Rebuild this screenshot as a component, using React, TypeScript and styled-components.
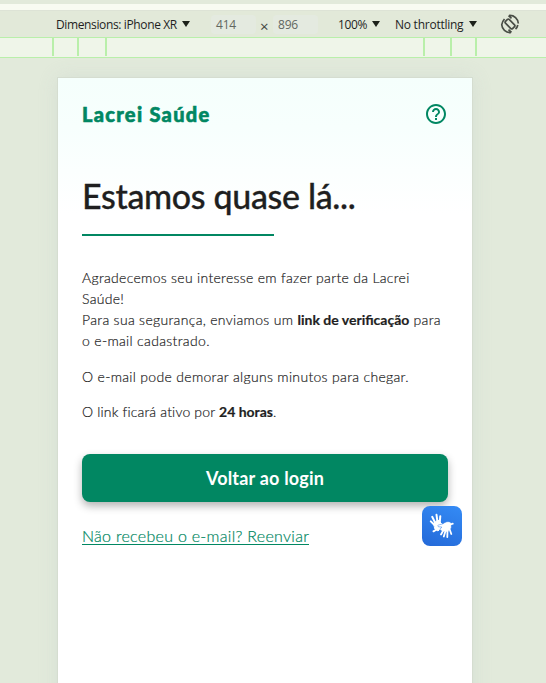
import React from "react";
import styled, { createGlobalStyle } from "styled-components";

const green = "#018762";

const GlobalStyle = createGlobalStyle`
  * { box-sizing: border-box; }
  body { margin: 0; background: #e2eadb; overflow: hidden; }
`;

const Page = styled.div`
  display: flex;
  flex-direction: column;
  width: 546px;
  height: 683px;
  overflow: hidden;
  background: #e2eadb;
  font-family: Lato, "Open Sans", sans-serif;
  color: #1f1f1f;
`;

const TopStrip = styled.div`
  flex: none;
  height: 10px;
  border-top: 4px solid #e2eadb;
  background: #f8fbf2;
`;

const Toolbar = styled.div`
  flex: none;
  display: flex;
  align-items: center;
  height: 27px;
  padding-left: 56px;
  border-top: 1px solid #dde3d6;
  background: #e2e9d9;
  font: 12px/16px "Open Sans", "Noto Sans", sans-serif;
  white-space: nowrap;
`;

const ToolLabel = styled.span<{ $w: number; $ls?: number }>`
  width: ${(p) => p.$w}px;
  flex: none;
  padding-top: 1px;
  letter-spacing: ${(p) => p.$ls ?? 0}px;
`;

const Caret = styled.span<{ $gap: number }>`
  flex: none;
  width: 8px;
  height: 6px;
  margin-right: ${(p) => p.$gap}px;
  background: #1c211a;
  clip-path: polygon(0 0, 100% 0, 50% 100%);
`;

const SizeField = styled.span<{ $gap: number }>`
  flex: none;
  width: 45px;
  height: 19px;
  padding-left: 5px;
  line-height: 19px;
  margin-right: ${(p) => p.$gap}px;
  border-radius: 4px;
  background: #e4eae0;
  color: #62675f;
  letter-spacing: -0.2px;
`;

const Times = styled.span`
  flex: none;
  width: 13px;
  padding-top: 3px;
  font-size: 15px;
  color: #41463e;
`;

const Ruler = styled.div`
  flex: none;
  display: flex;
  height: 21px;
  border-top: 1px solid #b9efaa;
  border-bottom: 1px solid #b9efaa;
  background: #eff5e9;
`;

const Tick = styled.i<{ $gap: number }>`
  width: 2px;
  height: 18px;
  margin-left: ${(p) => p.$gap}px;
  background: #b9efaa;
`;

const Stage = styled.div`
  flex: 1;
  padding: 20px 0 0 58px;
`;

const Device = styled.main`
  position: relative;
  width: 414px;
  height: 640px;
  padding: 24px 24px 0;
  background: linear-gradient(#f5fffc 0, #f7fffd 50px, #ffffff 136px);
  box-shadow: 0 0 0 1px #d5ddd0, 0 0 18px rgba(205, 215, 208, 0.65);
`;

const Header = styled.header`
  display: flex;
  align-items: center;
  justify-content: space-between;
  height: 24px;
  color: ${green};
`;

const Brand = styled.span`
  font-size: 20px;
  line-height: 24px;
  font-weight: 900;
  letter-spacing: 1.3px;
  white-space: nowrap;
  -webkit-text-stroke: 0.6px ${green};
`;

const Title = styled.h1`
  margin: 46px 0 0;
  padding-bottom: 13px;
  height: 62px;
  font-size: 34px;
  line-height: 48px;
  font-weight: 500;
  letter-spacing: -0.34px;
  white-space: nowrap;
  -webkit-text-stroke: 0.3px #1f1f1f;
`;

const Rule = styled.div`
  width: 192px;
  height: 2px;
  background: ${green};
`;

const Copy = styled.section`
  margin-top: 31px;
  font-size: 14px;
  line-height: 21px;
  font-weight: 300;
  -webkit-text-stroke: 0.2px #1f1f1f;
`;

const Paragraph = styled.p`
  margin: 0 0 14.5px;
`;

const Line = styled.span<{ $ls: number }>`
  display: block;
  white-space: nowrap;
  letter-spacing: ${(p) => p.$ls}px;
`;

const Strong = styled.strong`
  font-weight: 700;
  letter-spacing: 0;
`;

const Button = styled.button`
  display: block;
  width: 366px;
  height: 48px;
  margin: 32px 0 0;
  padding: 0;
  border: 0;
  border-radius: 8px;
  background: ${green};
  box-shadow: 0 4px 8px rgba(0, 0, 0, 0.3);
  color: #fff;
  font: 700 18px/48px Lato, sans-serif;
  letter-spacing: 0.2px;
`;

const ResendLink = styled.a`
  display: block;
  width: 227px;
  height: 19px;
  margin-top: 24px;
  border-bottom: 1px solid ${green};
  color: ${green};
  font-size: 16px;
  line-height: 20px;
  font-weight: 300;
  letter-spacing: 0.29px;
  white-space: nowrap;
  -webkit-text-stroke: 0.2px ${green};
`;

const SignBadge = styled.div`
  position: absolute;
  top: 428px;
  left: 364px;
  width: 40px;
  height: 40px;
  border-radius: 8px;
  background: linear-gradient(20deg, #2469d8, #348bf5);
`;

const RotateIcon = () => (
  <svg width="20" height="20" viewBox="0 0 20 20" fill="none" stroke="#484d45" strokeWidth="1.7">
    <rect x="7.400" y="5" width="5.200" height="10" rx="1.2" transform="rotate(-45 10 10)" />
    <path d="M9 1.500c5.400-.4 9 3.300 9.300 8M11 18.500c-5.400.4-9-3.300-9.300-8M8.500 1.600l3 2.700M11.500 18.400l-3-2.700M4.500 5c-1.700 1.900-2.500 3.500-2.700 5.500M15.500 15c1.200-1 2-2.400 2.300-4" />
  </svg>
);

const HelpIcon = () => (
  <svg width="24" height="24" viewBox="0 0 24 24" fill="currentColor">
    <path d="M11 18h2v-2h-2v2zm1-16C6.480 2 2 6.480 2 12s4.480 10 10 10 10-4.480 10-10S17.520 2 12 2zm0 18c-4.410 0-8-3.590-8-8s3.590-8 8-8 8 3.590 8 8-3.590 8-8 8zm0-14c-2.210 0-4 1.790-4 4h2c0-1.100.9-2 2-2s2 .9 2 2c0 2-3 1.750-3 5h2c0-2.250 3-2.500 3-5 0-2.210-1.790-4-4-4z" />
  </svg>
);

const HandsIcon = () => (
  <svg width="40" height="40" viewBox="0 0 40 40" fill="#fff" stroke="#fff" strokeLinecap="round">
    <path d="M12 17l4-3 4 4-1 4-3 3-3-2z" strokeWidth="1" />
    <path d="M12.500 19L8.800 15.400M13.300 17L10.200 10.800M15.500 16L14.500 8.800M17.800 16L18.300 10.200M14.500 23.500l-3 1.800" strokeWidth="2" fill="none" />
    <path d="M21.300 17.500c3-2.300 6-2.500 8-.5v5l-3.500 4-5.500-.5-2.500-2 2-2.500-3-.2c-1.500-.3-1.500-1.800.2-2z" stroke="#2c79e5" strokeWidth=".5" />
    <path d="M21 25l-2 3.500M23.500 25l-1.700 5.500M25.500 25l-.2 6M27.500 23l1.800 5M28.500 18.500l2.300-.8" strokeWidth="1.800" fill="none" />
  </svg>
);

export default function App() {
  return (
    <Page>
      <GlobalStyle />
      <TopStrip />
      <Toolbar>
        <ToolLabel $w={126} $ls={-0.37}>Dimensions: iPhone XR</ToolLabel>
        <Caret $gap={21} />
        <SizeField $gap={4}>414</SizeField>
        <Times>×</Times>
        <SizeField $gap={20}>896</SizeField>
        <ToolLabel $w={34} $ls={-0.4}>100%</ToolLabel>
        <Caret $gap={15} />
        <ToolLabel $w={74} $ls={-0.25}>No throttling</ToolLabel>
        <Caret $gap={23} />
        <RotateIcon />
      </Toolbar>
      <Ruler>
        <Tick $gap={52} />
        <Tick $gap={23} />
        <Tick $gap={26} />
        <Tick $gap={316} />
        <Tick $gap={25} />
        <Tick $gap={23} />
      </Ruler>
      <Stage>
        <Device>
          <Header>
            <Brand>Lacrei Saúde</Brand>
            <HelpIcon />
          </Header>
          <Title>Estamos quase lá...</Title>
          <Rule />
          <Copy>
            <Paragraph>
              <Line $ls={0.3}>Agradecemos seu interesse em fazer parte da Lacrei</Line>
              <Line $ls={0.3}>Saúde!</Line>
              <Line $ls={0.32}>Para sua segurança, enviamos um <Strong>link de verificação</Strong> para</Line>
              <Line $ls={0.33}>o e-mail cadastrado.</Line>
            </Paragraph>
            <Paragraph>
              <Line $ls={0.32}>O e-mail pode demorar alguns minutos para chegar.</Line>
            </Paragraph>
            <Paragraph>
              <Line $ls={0.17}>O link ficará ativo por <Strong>24 horas</Strong>.</Line>
            </Paragraph>
          </Copy>
          <Button>Voltar ao login</Button>
          <ResendLink>Não recebeu o e-mail? Reenviar</ResendLink>
          <SignBadge>
            <HandsIcon />
          </SignBadge>
        </Device>
      </Stage>
    </Page>
  );
}
